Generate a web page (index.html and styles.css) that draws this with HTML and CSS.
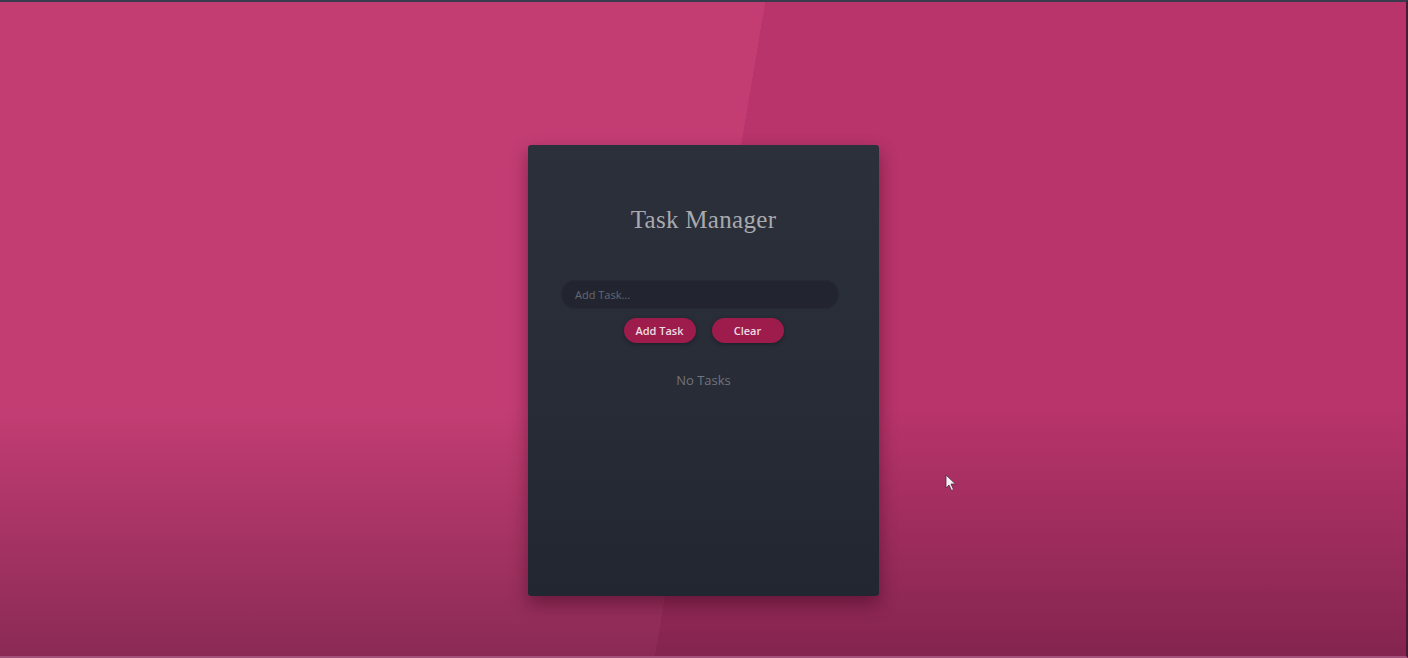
FILE: index.html
```html
<!DOCTYPE html>
<html lang="en">
<head>
<meta charset="utf-8">
<title>Task Manager</title>
<link rel="stylesheet" href="styles.css">
</head>
<body>
<main class="stage">
  <section class="card">
    <h1 class="title">Task Manager</h1>
    <input class="task-input" type="text" placeholder="Add Task...">
    <div class="actions">
      <button class="btn">Add Task</button>
      <button class="btn">Clear</button>
    </div>
    <p class="empty">No Tasks</p>
  </section>
</main>
<svg class="cursor" width="12" height="18" viewBox="0 0 12 18" aria-hidden="true">
  <path d="M1 1 L1 14 L4 11 L6.5 16.5 L8.5 15.5 L6 10 L10.5 10 Z" fill="#f4f0f2" stroke="#5a2440" stroke-width="0.8" stroke-linejoin="round"/>
</svg>
</body>
</html>
```
FILE: styles.css
```css
html, body {
  margin: 0;
  padding: 0;
}
body {
  width: 1408px;
  height: 658px;
  overflow: hidden;
  box-sizing: border-box;
  border-top: 2px solid #3a3a4e;
  border-bottom: 2px solid #a2527a;
  border-right: 2px solid #4a1a32;
  font-family: "Open Sans", "DejaVu Sans", sans-serif;
  background:
    linear-gradient(to bottom, rgba(40, 10, 30, 0) 62%, rgba(40, 10, 30, 0.37) 100%),
    linear-gradient(99.58deg, #c33d73 calc(50% + 6px), #b8346a calc(50% + 6px));
  position: relative;
}
.stage {
  display: flex;
  justify-content: center;
  padding-top: 143px;
  padding-left: 1px;
}
.card {
  width: 351px;
  height: 451px;
  box-sizing: border-box;
  border-radius: 3px;
  background: linear-gradient(to bottom, #2b303b 0%, #282c37 55%, #222630 100%);
  box-shadow: 0 8px 18px rgba(50, 0, 25, 0.45);
  display: flex;
  flex-direction: column;
  align-items: center;
  padding-top: 58px;
}
.title {
  margin: 0;
  font-family: "Liberation Serif", "DejaVu Serif", serif;
  font-weight: normal;
  font-size: 25px;
  line-height: 34px;
  letter-spacing: 0.3px;
  color: #a9a9ae;
}
.task-input {
  margin-top: 43px;
  align-self: flex-start;
  margin-left: 33px;
  width: 278px;
  height: 29px;
  box-sizing: border-box;
  border: none;
  border-radius: 15px;
  background: #222530;
  box-shadow: inset 0 0 0 1px #262a35;
  padding: 0 14px;
  font-family: "Open Sans", "DejaVu Sans", sans-serif;
  font-size: 11px;
  color: #c0c0c6;
  outline: none;
}
.task-input::placeholder {
  color: #646874;
}
.actions {
  margin-top: 9px;
  display: flex;
  gap: 16px;
}
.btn {
  width: 72px;
  height: 25px;
  border: none;
  border-radius: 13px;
  background: #9e1c4b;
  color: #ecdde3;
  font-family: "Open Sans", "DejaVu Sans", sans-serif;
  font-weight: 600;
  font-size: 11px;
  padding: 0;
  box-shadow: 0 1px 4px rgba(0, 0, 0, 0.35);
}
.empty {
  margin: 28px 0 0;
  font-size: 13px;
  line-height: 18px;
  color: #70747d;
}
.cursor {
  position: absolute;
  left: 945px;
  top: 472px;
}
```
